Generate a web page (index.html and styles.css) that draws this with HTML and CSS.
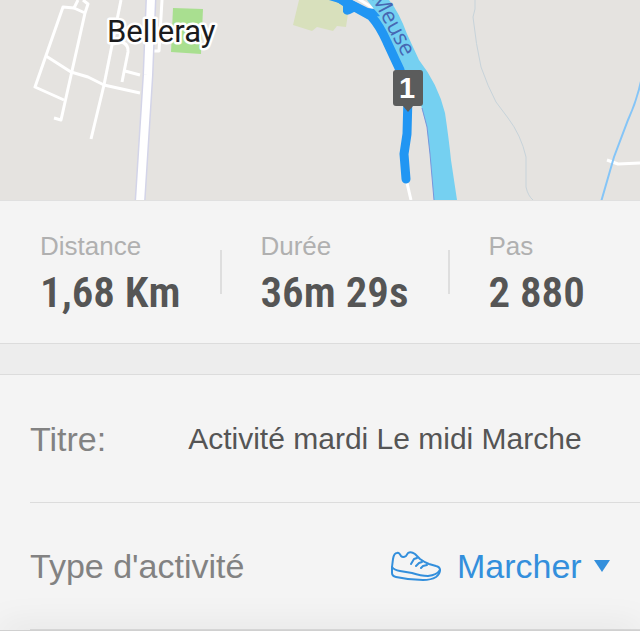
FILE: index.html
```html
<!DOCTYPE html>
<html lang="fr">
<head>
    <meta charset="utf-8">
    <meta name="viewport" content="width=device-width, initial-scale=1">
    <title>Activité</title>
    <link rel="stylesheet" href="styles.css">
</head>
<body>

<main class="activity">
    <!-- Map -->
    <svg class="map" viewBox="0 0 640 200" preserveAspectRatio="xMidYMid slice" role="img" aria-label="Belleray, Meuse">
        <!-- Parks -->
        <path fill="#a9df90" d="M173 8L203 9L201 54L171 52Z"/>
        <path fill="#d8e0bc" d="M299 0H350L346 27L337 26L333 31L317 27L312 31L293 25Z"/>

        <!-- Small roads -->
        <g class="road">
            <path d="M78 0L74 8L63 7L35 87L64 100"/>
            <path d="M74 8L85 13L88 4L83 0M85 13L61 120L54 118"/>
            <path d="M46 56L71 72L88 77L104 85L140 93"/>
            <path d="M121 0L104 85L91 139"/>
            <path d="M113 44L122 42Q129 45 128 52L122 82M125 71L140 75"/>
            <path d="M162 0L159 51H153"/>
            <path d="M357 -2L373 8"/>
            <path d="M407 183L411 200"/>
            <path d="M607 160L618 164L640 163"/>
        </g>

        <!-- Main road -->
        <path class="main-road-edge" d="M151 -2L148 75L140 202"/>
        <path class="main-road" d="M151 -2L148 75L140 202"/>

        <!-- Streams -->
        <path fill="none" stroke="#c7d3da" d="M475 0V9L473 17Q476 45 481 67Q488 87 496 102L508 118Q521 135 526 157V187Q528 196 533 200"/>
        <path fill="none" stroke="#85c5f7" stroke-width="2" d="M641 81Q637 100 628 120L614 157L601 202"/>

        <!-- River -->
        <path fill="#75d0f1" d="M367 0H389Q399 12 407 34L419 60Q438 84 445 113Q449 140 451 160L457 200H434L430 154L427 127L421 105L407 80L394 55L374 9Z"/>
        <path fill="none" stroke="#7795db" d="M422 108L427 127L430 154L434 200"/>
        <text class="river-name" transform="translate(371 -3) rotate(62)">Meuse</text>

        <!-- Route -->
        <path class="route" d="M328 -5L341 -1L353 6L371 16Q380 26 387 42L400 70L408 96L407 134L404 154L406 179"/>
        <path fill="#2196f3" d="M334 0L343 6L343 12Q345 16 350 14L356 11L370 18L380 16L374 9L368 8L352 0Z"/>

        <!-- Kilometre marker -->
        <path fill="#5b5c5c" d="M396 70H420Q423 70 423 73V103Q423 106 420 106H413L408 112L403 106H396Q393 106 393 103V73Q393 70 396 70Z"/>
        <text class="marker-text" x="407" y="98">1</text>

        <text class="town-name" x="107" y="42">Belleray</text>
    </svg>

    <!-- Stats -->
    <dl class="stats">
        <div class="stat">
            <dt class="stat-label">Distance</dt>
            <dd class="stat-value">1,68 Km</dd>
        </div>
        <div class="stat">
            <dt class="stat-label">Durée</dt>
            <dd class="stat-value">36m 29s</dd>
        </div>
        <div class="stat">
            <dt class="stat-label">Pas</dt>
            <dd class="stat-value">2 880</dd>
        </div>
    </dl>

    <!-- Details -->
    <form class="details">
        <div class="row">
            <label class="row-label" for="title">Titre:</label>
            <input class="title-input" type="text" id="title" value="Activité mardi Le midi Marche">
        </div>
        <div class="row">
            <label class="row-label" for="type">Type d'activité</label>
            <div class="type-picker">
                <svg class="shoe" viewBox="0 0 50 30" aria-hidden="true">
                    <path d="M6 2Q3 2 2 8L1 16V22Q1 25 5 26Q18 29 32 29Q40 29 45 26Q49 23 49 19Q49 16 45 15L38 13Q33 11 29 8L24 3Q20 0 17 2L15 5Q12 7 10 5Q8 1 6 2Z"/>
                    <path d="M1 16Q3 19 9 20L21 22Q30 25 37 25Q46 24 49 19M20 13L23 8L26 7M25 15L28 12L31 11M30 17L32 15L36 14"/>
                </svg>
                <select class="type-select" id="type">
                    <option>Marcher</option>
                </select>
                <svg class="arrow" viewBox="0 0 16 12" aria-hidden="true"><path d="M0 0H16L8 12Z"/></svg>
            </div>
        </div>
    </form>
</main>

<footer class="bottom-bar"></footer>

</body>
</html>
```

FILE: styles.css
```css
* {
    box-sizing: border-box;
}

body {
    display: flex;
    flex-direction: column;
    min-height: 100vh;
    margin: 0;
    background: #f4f4f4;
    color: #555;
    font-family: "Liberation Sans", Arial, sans-serif;
}

/* Map */
.map {
    display: block;
    width: 100%;
    height: 200px;
    background: #e5e3e0;
}

.road {
    fill: none;
    stroke: #fff;
    stroke-width: 3;
    stroke-linejoin: round;
}

.main-road-edge {
    fill: none;
    stroke: #d3d4e8;
    stroke-width: 11;
}

.main-road {
    fill: none;
    stroke: #fff;
    stroke-width: 8;
}

.route {
    fill: none;
    stroke: #2196f3;
    stroke-width: 9;
    stroke-linecap: round;
    stroke-linejoin: round;
}

.river-name {
    fill: #4667b3;
    font: 22px "Open Sans", sans-serif;
}

.marker-text {
    fill: #fff;
    font-size: 29px;
    font-weight: bold;
    text-anchor: middle;
}

.town-name {
    fill: #1b1b1d;
    stroke: #fff;
    stroke-width: 5;
    stroke-linejoin: round;
    paint-order: stroke;
    font: 31px Roboto, sans-serif;
}

/* Stats */
.stats {
    display: flex;
    margin: 0;
    padding: 28px 0 22px;
    border-top: 1px solid #e0e0e0;
    border-bottom: 1px solid #dcdcdc;
}

.stat {
    position: relative;
    padding: 0 40px;
}

.stat + .stat::before {
    content: "";
    position: absolute;
    top: 21px;
    left: 0;
    width: 2px;
    height: 44px;
    background: #dedede;
}

.stat-label {
    color: #b0b0b0;
    font-size: 26px;
    line-height: 34px;
}

.stat-value {
    margin: 0;
    font-family: "Roboto Condensed", Roboto, sans-serif;
    font-size: 43px;
    font-weight: 600;
    line-height: 58px;
    white-space: nowrap;
}

/* Details */
.details {
    padding-top: 2px;
    border-top: 30px solid #ededed;
    box-shadow: inset 0 1px #dcdcdc;
}

.row {
    display: flex;
    align-items: center;
    justify-content: space-between;
    height: 127px;
    margin-left: 30px;
    padding-right: 30px;
    border-bottom: 1px solid #dcdcdc;
}

.row-label {
    color: #828282;
    font-size: 34px;
    white-space: nowrap;
}

.title-input {
    flex: 1;
    min-width: 0;
    margin-left: 82px;
    padding: 0;
    border: 0;
    background: none;
    color: #555;
    font-family: inherit;
    font-size: 30px;
}

.type-picker {
    display: flex;
    align-items: center;
    color: #338fdc;
}

.shoe {
    width: 50px;
    height: 30px;
    margin-right: 16px;
    fill: none;
    stroke: currentColor;
    stroke-width: 2;
    stroke-linecap: round;
    stroke-linejoin: round;
}

.type-select {
    appearance: none;
    padding: 0;
    border: 0;
    background: none;
    color: inherit;
    font-family: inherit;
    font-size: 34px;
}

.arrow {
    width: 16px;
    height: 12px;
    margin-left: 12px;
    fill: currentColor;
}

/* Bottom bar */
.bottom-bar {
    flex: 1;
    border-top: 1px solid #d0d0d0;
    background: #fff;
    box-shadow: 0 0 34px rgba(0, 0, 0, 0.15);
}
```
